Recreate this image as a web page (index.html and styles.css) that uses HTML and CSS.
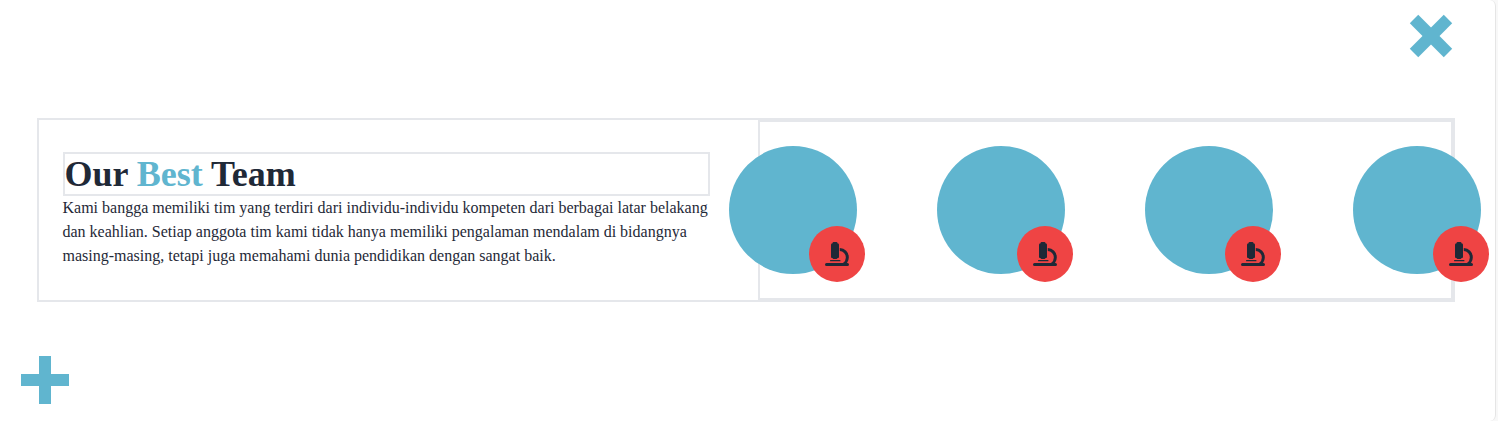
FILE: index.html
```html
<!DOCTYPE html>
<html lang="id">
<head>
<meta charset="utf-8">
<title>Our Best Team</title>
<link rel="stylesheet" href="styles.css">
</head>
<body>
<svg width="0" height="0" class="defs">
  <symbol id="microscope" viewBox="0 0 24 24">
    <rect x="6" y="1.500" width="8" height="14.500" rx="1"/>
    <rect x="7.500" y="0" width="5" height="17" rx="1.200"/>
    <rect x="5" y="18" width="10.500" height="1.300" rx=".6"/>
    <path d="M1.500 21H18a6.500 6.500 0 0 0 2.800-5.800 6.300 6.300 0 0 0-6-6.200V6a9.200 9.200 0 0 1 9 9.200A9.200 9.200 0 0 1 22 21h.5a1.500 1.500 0 0 1 0 3H1.500a1.500 1.500 0 0 1 0-3Z"/>
  </symbol>
</svg>
<main class="frame">
  <div class="top"><div class="plus plus-rotated"></div></div>
  <section class="team">
    <div class="intro">
      <h1 class="title">Our <span class="accent">Best</span> Team</h1>
      <p class="text">Kami bangga memiliki tim yang terdiri dari individu-individu kompeten dari berbagai latar belakang dan keahlian. Setiap anggota tim kami tidak hanya memiliki pengalaman mendalam di bidangnya masing-masing, tetapi juga memahami dunia pendidikan dengan sangat baik.</p>
    </div>
    <div class="members">
      <div class="member"><div class="badge"><svg class="icon"><use href="#microscope"/></svg></div></div>
      <div class="member"><div class="badge"><svg class="icon"><use href="#microscope"/></svg></div></div>
      <div class="member"><div class="badge"><svg class="icon"><use href="#microscope"/></svg></div></div>
      <div class="member"><div class="badge"><svg class="icon"><use href="#microscope"/></svg></div></div>
    </div>
  </section>
  <div class="bottom"><div class="plus"></div></div>
</main>
</body>
</html>
```

FILE: styles.css
```css
* { box-sizing: border-box; margin: 0; padding: 0; }
body {
  background: #f8f8f8;
  color: #1f2937;
  font-family: "Liberation Serif", "Times New Roman", serif;
  overflow: hidden;
}
.defs { position: absolute; }
.frame {
  width: 1496px;
  height: 421px;
  background: #fff;
  border-right: 1px solid #e5e5e5;
  border-radius: 0 6px 6px 0;
}
.top {
  display: flex;
  justify-content: flex-end;
  height: 118px;
  padding: 12px 40px 0 0;
}
.plus {
  width: 48px;
  height: 48px;
  background:
    linear-gradient(#60b5cf, #60b5cf) center / 48px 12px no-repeat,
    linear-gradient(#60b5cf, #60b5cf) center / 12px 48px no-repeat;
}
.plus-rotated { transform: rotate(45deg); }
.team {
  display: flex;
  width: 1418px;
  height: 184px;
  margin-left: 37px;
  border: 2px solid #e5e7eb;
}
.intro {
  width: 719px;
  padding: 32px 48px 0 24px;
}
.title {
  height: 44px;
  border: 2px solid #e5e7eb;
  font-size: 36px;
  line-height: 40px;
  text-indent: -0.6px;
}
.accent { color: #60b5cf; }
.text {
  margin: 0 -1px 0 -0.5px;
  font-size: 16px;
  line-height: 24px;
}
.members {
  display: flex;
  justify-content: center;
  gap: 80px;
  width: 695px;
  padding: 24px 1px 0 0;
  border: 2px solid #e5e7eb;
}
.member {
  position: relative;
  flex: none;
  width: 128px;
  height: 128px;
  border-radius: 50%;
  background: #60b5cf;
}
.badge {
  position: absolute;
  right: -8px;
  bottom: -8px;
  display: flex;
  align-items: center;
  justify-content: center;
  width: 56px;
  height: 56px;
  border-radius: 50%;
  background: #ef4444;
}
.icon {
  width: 24px;
  height: 24px;
  fill: #1f2937;
}
.bottom { padding: 54px 0 0 21px; }
```
